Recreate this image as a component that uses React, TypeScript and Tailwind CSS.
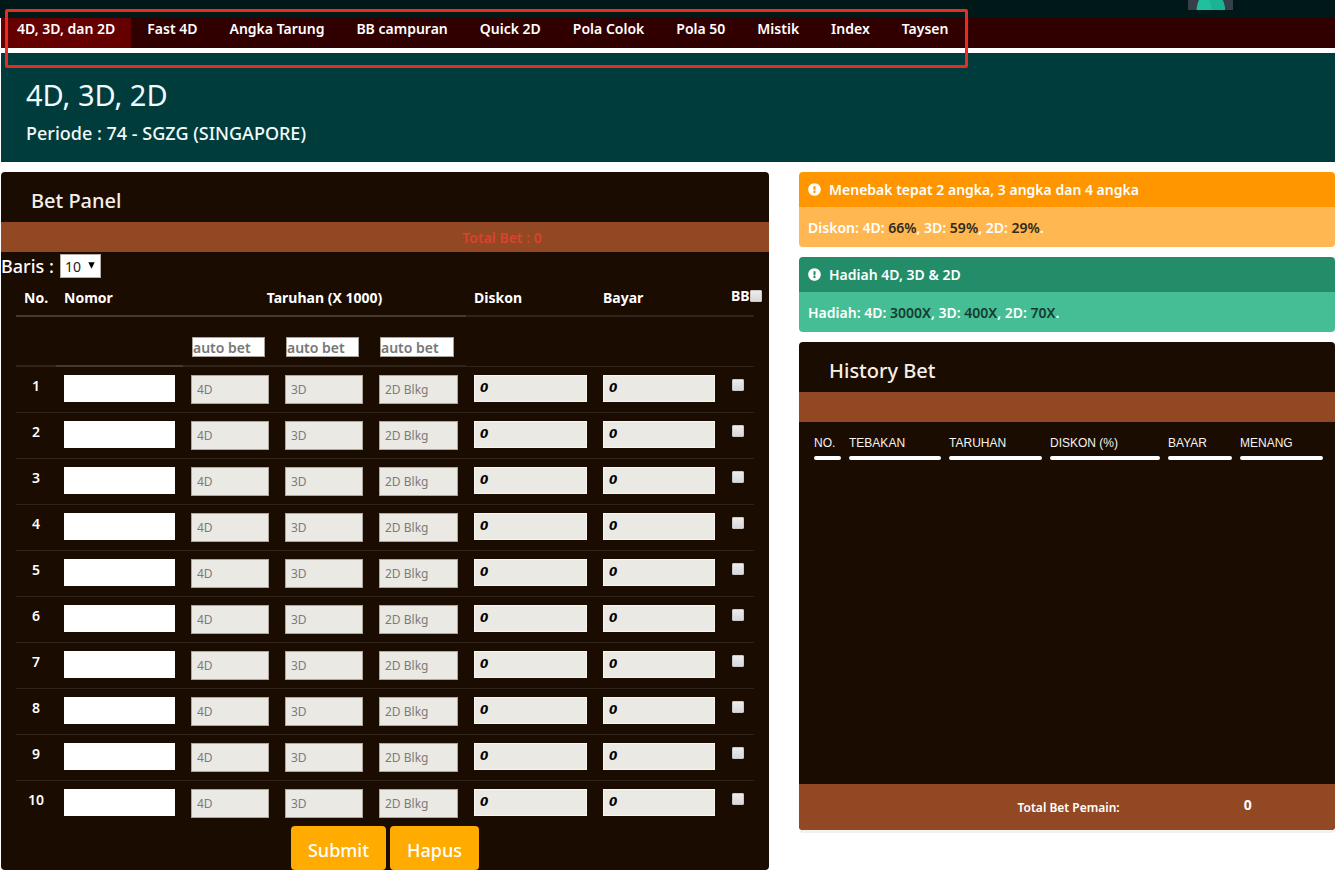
import { useState } from "react";
import { FaExclamationCircle } from "react-icons/fa";

const games = [
  "4D, 3D, dan 2D",
  "Fast 4D",
  "Angka Tarung",
  "BB campuran",
  "Quick 2D",
  "Pola Colok",
  "Pola 50",
  "Mistik",
  "Index",
  "Taysen",
];

const historyColumns = [
  { label: "NO.", width: "w-[27px]" },
  { label: "TEBAKAN", width: "w-[92px]" },
  { label: "TARUHAN", width: "w-[93px]" },
  { label: "DISKON (%)", width: "w-[110px]" },
  { label: "BAYAR", width: "w-[64px]" },
  { label: "MENANG", width: "w-[83px]" },
];

const stakes = ["4D", "3D", "2D Blkg"];

function TopBar() {
  return (
    <div className="flex h-[18px] justify-end bg-[#001818] pr-[102px]">
      <svg width="45" height="10" viewBox="0 0 45 10" aria-hidden="true">
        <rect width="45" height="10" fill="#363e49" />
        <path d="M8.5 10C8.8 6 9.8 2.5 11 0H34.5C35.8 2.5 36.8 6 37 10Z" fill="#1fbf9f" />
        <path d="M22 0H34.5C35.8 2.5 36.8 6 37 10H24Z" fill="#1cb394" />
      </svg>
    </div>
  );
}

function GameNav() {
  return (
    <nav className="ml-px flex h-[30px] bg-[#300000]">
      {games.map((game, i) => (
        <a
          key={game}
          href="#"
          className={`flex items-center px-4 pb-2 text-sm font-semibold whitespace-nowrap text-white ${
            i === 0 ? "bg-[#640000]" : ""
          }`}
        >
          {game}
        </a>
      ))}
    </nav>
  );
}

function Check({ label }: { label: string }) {
  return (
    <input
      type="checkbox"
      aria-label={label}
      className="block size-3 shrink-0 appearance-none rounded-[1px] border border-[#c9c9c9] bg-linear-to-b from-[#ececec] to-[#d8d8dc] checked:bg-[#3b82f6]"
    />
  );
}

function BetTable({ rows }: { rows: number }) {
  const bright = "border-b-2 border-[#463a2f]";
  const dim = "border-b-2 border-[#30241a]";
  return (
    <div className="px-[15px]">
      <table className="w-full table-fixed border-separate border-spacing-0 text-left text-sm text-white">
        <colgroup>
          <col className="w-[40px]" />
          <col className="w-[127px]" />
          <col className="w-[94px]" />
          <col className="w-[94px]" />
          <col className="w-[95px]" />
          <col className="w-[129px]" />
          <col className="w-[128px]" />
          <col className="w-[31px]" />
        </colgroup>
        <thead>
          <tr className="h-[37px]">
            <th className={`px-2 ${bright}`}>No.</th>
            <th className={`px-2 ${bright}`}>Nomor</th>
            <th colSpan={3} className={`text-center ${bright}`}>
              Taruhan (X 1000)
            </th>
            <th className={`px-2 ${dim}`}>Diskon</th>
            <th className={`px-2 ${dim}`}>Bayar</th>
            <th className={`pb-1 pl-2 ${dim}`}>
              <span className="flex items-center">
                BB
                <Check label="BB semua" />
              </span>
            </th>
          </tr>
        </thead>
        <tbody>
          <tr className="h-[50px]">
            <td className={dim} />
            <td className={bright} />
            {stakes.map((stake) => (
              <td key={stake} className={`pt-5 pr-3 pb-2 pl-[9px] align-top ${dim}`}>
                <input
                  aria-label={`auto bet ${stake}`}
                  placeholder="auto bet"
                  className="block h-5 w-full border border-[#a9a39c] bg-white pt-[2px] text-sm font-semibold text-black placeholder:text-[#777]"
                />
              </td>
            ))}
            <td className="border-b border-[#30241a]" />
            <td className="border-b border-[#30241a]" />
            <td className="border-b border-[#30241a]" />
          </tr>
          {Array.from({ length: rows }, (_, i) => i + 1).map((n) => {
            const line = n < rows ? "border-b border-[#30241a]" : "";
            return (
              <tr key={n}>
                <td className={`pt-[9px] text-center align-top font-semibold ${line}`}>{n}</td>
                <td className={`p-2 align-top ${line}`}>
                  <input
                    aria-label={`Nomor ${n}`}
                    className="block h-[27px] w-full bg-white px-1 text-black"
                  />
                </td>
                {stakes.map((stake) => (
                  <td key={stake} className={`p-2 align-top ${line}`}>
                    <input
                      aria-label={`${stake} ${n}`}
                      placeholder={stake}
                      className="block h-[29px] w-full border border-[#aea79f] bg-[#ebe9e4] px-[5px] text-xs text-black placeholder:text-[#7d7b78]"
                    />
                  </td>
                ))}
                {["Diskon", "Bayar"].map((name) => (
                  <td key={name} className={`p-2 align-top ${line}`}>
                    <input
                      aria-label={`${name} ${n}`}
                      defaultValue="0"
                      readOnly
                      className="block h-[27px] w-full border border-[#f7f5ef] bg-[#ebe9e4] px-[5px] pb-px font-['DejaVu_Sans',sans-serif] text-xs font-bold text-black italic"
                    />
                  </td>
                ))}
                <td className={`pt-3 pl-[9px] align-top ${line}`}>
                  <Check label={`BB ${n}`} />
                </td>
              </tr>
            );
          })}
        </tbody>
      </table>
    </div>
  );
}

function BetPanel() {
  const [rows, setRows] = useState(10);
  return (
    <section className="rounded bg-[#1a0c00]">
      <h2 className="flex h-[50px] items-center px-[30px] pt-2 text-xl font-medium text-[#f5efe9]">
        Bet Panel
      </h2>
      <div className="flex h-[30px] items-center justify-center bg-[#934824] pt-px pl-[234px] text-sm font-semibold text-[#d9432f]">
        Total Bet : 0
      </div>
      <div className="flex h-7 items-center text-lg font-medium text-white">
        <label htmlFor="baris">Baris :</label>
        <div className="relative ml-[6px]">
          <select
            id="baris"
            value={rows}
            onChange={(e) => setRows(Number(e.target.value))}
            className="block h-6 w-[41px] appearance-none border border-[#b5b0aa] bg-white pt-px pl-1 text-sm font-normal text-[#222]"
          >
            <option value={5}>5</option>
            <option value={10}>10</option>
            <option value={20}>20</option>
          </select>
          <svg
            className="pointer-events-none absolute top-2 right-[6px]"
            width="7"
            height="7"
            viewBox="0 0 7 7"
            aria-hidden="true"
          >
            <path d="M0.3 0.3H6.7L3.5 6.7Z" fill="#000" />
          </svg>
        </div>
      </div>
      <BetTable rows={rows} />
      <div className="flex justify-center gap-1">
        <button className="h-11 rounded bg-[#ffab00] px-[17px] pt-[3px] text-lg font-medium text-white">
          Submit
        </button>
        <button className="h-11 rounded bg-[#ffab00] px-[17px] pt-[3px] text-lg font-medium text-white">
          Hapus
        </button>
      </div>
    </section>
  );
}

type NoticeProps = {
  title: string;
  lead: string;
  items: [string, string][];
  headClass: string;
  bodyClass: string;
  valueClass: string;
};

function Notice({ title, lead, items, headClass, bodyClass, valueClass }: NoticeProps) {
  return (
    <section className="overflow-hidden rounded text-sm font-semibold text-white">
      <h3 className={`flex h-[35px] items-center gap-2 px-[9px] ${headClass}`}>
        <FaExclamationCircle size={13} />
        {title}
      </h3>
      <p className={`flex h-10 items-center px-[9px] pt-[2px] whitespace-pre ${bodyClass}`}>
        {lead}:
        {items.map(([name, value], i) => (
          <span key={name}>
            {" "}
            {name}: <span className={valueClass}>{value}</span>
            {i < items.length - 1 ? "," : "."}
          </span>
        ))}
      </p>
    </section>
  );
}

function HistoryPanel() {
  return (
    <section className="overflow-hidden rounded bg-[#1a0c00] shadow-[0_3px_0_#f5f0ed]">
      <h2 className="flex h-[50px] items-center px-[30px] pt-2 text-xl font-medium text-[#f5efe9]">
        History Bet
      </h2>
      <div className="h-[30px] bg-[#934824]" />
      <div className="min-h-[362px] pt-[13px] pr-1 pl-[7px]">
        <table className="w-full table-fixed border-separate border-spacing-x-2 border-spacing-y-0 text-left font-['Liberation_Sans',Arial,sans-serif] text-xs text-[#f7f3ef]">
          <thead>
            <tr>
              {historyColumns.map((column) => (
                <th key={column.label} className={`p-0 font-medium whitespace-nowrap ${column.width}`}>
                  {column.label}
                  <div className="mt-[5px] h-1 rounded-full bg-white" />
                </th>
              ))}
            </tr>
          </thead>
        </table>
      </div>
      <div className="grid h-[46px] grid-cols-[60%_1fr] items-center bg-[#934824] text-white">
        <span className="pt-[2px] pr-px text-right text-xs font-semibold">Total Bet Pemain:</span>
        <span className="pb-1 pl-[123px] text-sm font-bold">0</span>
      </div>
    </section>
  );
}

export default function App() {
  return (
    <div className="relative bg-white font-['Noto_Sans','Open_Sans',sans-serif]">
      <TopBar />
      <GameNav />
      <header className="mt-[5px] ml-px h-[109px] bg-[#003c3c] px-[25px] pt-6 text-[#f3fafa]">
        <h1 className="text-[29px] leading-9">4D, 3D, 2D</h1>
        <p className="mt-2 text-lg leading-6 font-medium">Periode : 74 - SGZG (SINGAPORE)</p>
      </header>
      <main className="mt-[10px] ml-px grid grid-cols-[768fr_536fr] items-start gap-[30px]">
        <BetPanel />
        <div className="flex flex-col gap-[10px]">
          <Notice
            title="Menebak tepat 2 angka, 3 angka dan 4 angka"
            lead="Diskon"
            items={[
              ["4D", "66%"],
              ["3D", "59%"],
              ["2D", "29%"],
            ]}
            headClass="bg-[#ff9600]"
            bodyClass="bg-[#ffb751]"
            valueClass="text-[#33291a]"
          />
          <Notice
            title="Hadiah 4D, 3D & 2D"
            lead="Hadiah"
            items={[
              ["4D", "3000X"],
              ["3D", "400X"],
              ["2D", "70X"],
            ]}
            headClass="bg-[#238d69]"
            bodyClass="bg-[#45be95]"
            valueClass="text-[#183a2e]"
          />
          <HistoryPanel />
        </div>
      </main>
      <div className="pointer-events-none absolute top-[9px] left-[5px] h-[59px] w-[963px] rounded-xs border-3 border-[#e82c20]" />
    </div>
  );
}
